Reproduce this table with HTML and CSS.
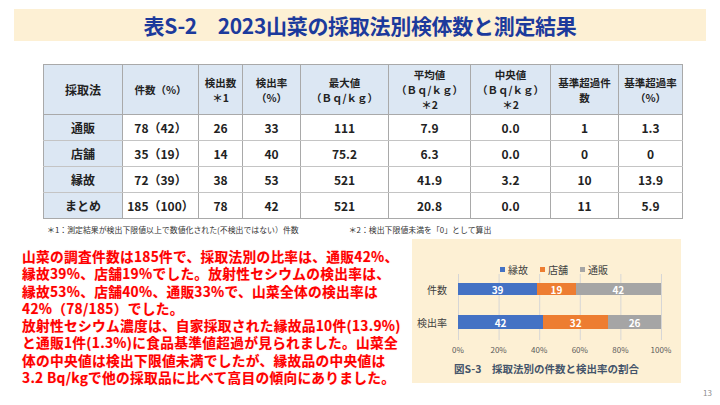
FILE: index.html
```html
<!DOCTYPE html>
<html lang="ja">
<head>
<meta charset="utf-8">
<link rel="stylesheet" href="styles.css">
</head>
<body>
<div class="slide">
  <div class="title-bar">表S-2　2023山菜の採取法別検体数と測定結果</div>

  <table class="data">
    <colgroup>
      <col style="width:79px"><col style="width:76px"><col style="width:44px"><col style="width:58px"><col style="width:88px"><col style="width:82px"><col style="width:80px"><col style="width:68px"><col style="width:64px">
    </colgroup>
    <thead>
      <tr>
        <th>採取法</th>
        <th>件数（%）</th>
        <th>検出数<br>＊1</th>
        <th>検出率<br>（%）</th>
        <th>最大値<br>（Ｂｑ/ｋｇ）</th>
        <th>平均値<br>（Ｂｑ/ｋｇ）<br>＊2</th>
        <th>中央値<br>（Ｂｑ/ｋｇ）<br>＊2</th>
        <th>基準超過件<br>数</th>
        <th>基準超過率<br>（%）</th>
      </tr>
    </thead>
    <tbody>
      <tr><th>通販</th><td>78（42）</td><td>26</td><td>33</td><td>111</td><td>7.9</td><td>0.0</td><td>1</td><td>1.3</td></tr>
      <tr><th>店舗</th><td>35（19）</td><td>14</td><td>40</td><td>75.2</td><td>6.3</td><td>0.0</td><td>0</td><td>0</td></tr>
      <tr><th>縁故</th><td>72（39）</td><td>38</td><td>53</td><td>521</td><td>41.9</td><td>3.2</td><td>10</td><td>13.9</td></tr>
      <tr><th>まとめ</th><td>185（100）</td><td>78</td><td>42</td><td>521</td><td>20.8</td><td>0.0</td><td>11</td><td>5.9</td></tr>
    </tbody>
  </table>

  <div class="notes">
    <span class="note1">＊1：測定結果が検出下限値以上で数値化された(不検出ではない）件数</span>
    <span class="note2">＊2：検出下限値未満を「0」として算出</span>
  </div>

  <div class="bottom">
    <p class="summary">山菜の調査件数は185件で、採取法別の比率は、通販42%、<br>縁故39%、店舗19%でした。放射性セシウムの検出率は、<br>縁故53%、店舗40%、通販33%で、山菜全体の検出率は<br>42%（78/185）でした。<br>放射性セシウム濃度は、自家採取された縁故品10件(13.9%)<br>と通販1件(1.3%)に食品基準値超過が見られました。山菜全<br>体の中央値は検出下限値未満でしたが、縁故品の中央値は<br>3.2 Bq/kgで他の採取品に比べて高目の傾向にありました。</p>

    <div class="chart">
      <div class="legend">
        <span class="lg"><i class="sw blue"></i>縁故</span>
        <span class="lg"><i class="sw orange"></i>店舗</span>
        <span class="lg"><i class="sw gray"></i>通販</span>
      </div>
      <div class="plot">
        <div class="cats">
          <span>件数</span>
          <span>検出率</span>
        </div>
        <div class="bars">
          <div class="bar b1">
            <span class="seg blue" style="width:39%">39</span><span class="seg orange" style="width:19%">19</span><span class="seg gray" style="width:42%">42</span>
          </div>
          <div class="bar b2">
            <span class="seg blue" style="width:42%">42</span><span class="seg orange" style="width:32%">32</span><span class="seg gray" style="width:26%">26</span>
          </div>
        </div>
      </div>
      <div class="axis">
        <span>0%</span><span>20%</span><span>40%</span><span>60%</span><span>80%</span><span>100%</span>
      </div>
      <div class="caption">図S-3　採取法別の件数と検出率の割合</div>
    </div>
  </div>

  <div class="page">13</div>
</div>
</body>
</html>
```

FILE: styles.css
```css
html, body {
  margin: 0;
  padding: 0;
  background: #ffffff;
}

.slide {
  width: 720px;
  height: 405px;
  overflow: hidden;
  font-family: "Noto Sans CJK JP", "Noto Sans", sans-serif;
  color: #222;
}

.title-bar {
  margin: 9px 14px 0;
  height: 32px;
  background: #fdf0d4;
  display: flex;
  align-items: center;
  justify-content: center;
  font-size: 21px;
  font-weight: 700;
  color: #1c3a9c;
  letter-spacing: -0.3px;
}

.data {
  margin: 23px 0 0 43px;
  width: 639px;
  border-collapse: collapse;
  table-layout: fixed;
  font-size: 11.5px;
  font-weight: 700;
  color: #222;
}

.data th, .data td {
  border: 1px solid #a9a9a9;
  text-align: center;
  padding: 0;
}

.data thead th {
  height: 49px;
  background: #dce7f3;
  line-height: 15px;
  font-size: 10.5px;
  vertical-align: middle;
}

.data thead th:first-child {
  font-size: 12px;
}

.data tbody th {
  background: #dce7f3;
  font-size: 12px;
}

.data tbody td, .data tbody th {
  height: 25px;
  font-size: 12px;
  border-top-color: #c4c4c4;
  border-bottom-color: #c4c4c4;
}

.data tbody tr:last-child td,
.data tbody tr:last-child th {
  border-bottom-color: #a9a9a9;
}

.notes {
  margin: 6px 0 0 47px;
  display: flex;
  font-size: 7.9px;
  color: #333;
  line-height: 10px;
}

.note2 {
  margin-left: 50px;
}

.bottom {
  display: flex;
  margin-top: 4px;
  height: 144px;
}

.summary {
  margin: 0;
  padding: 9px 0 0 22px;
  font-size: 13.7px;
  line-height: 17.3px;
  font-weight: 700;
  color: #ff0000;
  white-space: nowrap;
  letter-spacing: 0.3px;
  text-shadow: 0 0 1px rgba(255, 120, 120, 0.6);
}

.chart {
  margin-left: auto;
  margin-right: 39px;
  width: 269px;
  flex-shrink: 0;
  background: #fdf0d4;
  display: flex;
  flex-direction: column;
  padding-top: 25px;
  box-sizing: border-box;
}

.legend {
  height: 10px;
  display: flex;
  align-items: center;
  padding-left: 88px;
  font-size: 10px;
  color: #404040;
  gap: 12px;
}

.lg {
  display: flex;
  align-items: center;
}

.sw {
  display: inline-block;
  width: 5px;
  height: 5px;
  margin-right: 3px;
}

.blue { background: #4472c4; }
.orange { background: #ed7d31; }
.gray { background: #a5a5a5; }

.plot {
  display: flex;
  height: 66px;
}

.cats {
  width: 46px;
  display: grid;
  grid-template-rows: 30px 36px;
  font-size: 10px;
  color: #404040;
}

.cats span {
  display: flex;
  align-items: center;
  justify-content: flex-end;
  padding-right: 11px;
}

.bars {
  width: 203px;
  display: grid;
  grid-template-rows: 30px 36px;
  align-items: center;
  background-image: linear-gradient(to right, #d6d6d6 1px, transparent 1px);
  background-size: 40.6px 100%;
  border-right: 1px solid #d6d6d6;
}

.bar {
  display: flex;
  width: 203px;
}

.b1 { height: 12px; }
.b2 { height: 14px; }

.seg {
  display: flex;
  align-items: center;
  justify-content: center;
  color: #ffffff;
  font-size: 10px;
  font-weight: 700;
  height: 100%;
}

.axis {
  margin: 5px 0 0 31px;
  width: 233px;
  display: flex;
  justify-content: space-between;
  font-size: 8px;
  color: #595959;
  line-height: 10px;
}

.axis span {
  width: 30px;
  text-align: center;
}

.caption {
  margin-top: 8px;
  text-align: center;
  font-size: 10.5px;
  font-weight: 700;
  color: #44546a;
  line-height: 12px;
}

.page {
  text-align: right;
  padding-right: 8px;
  margin-top: 4px;
  font-size: 8px;
  color: #8c8c8c;
}
```
